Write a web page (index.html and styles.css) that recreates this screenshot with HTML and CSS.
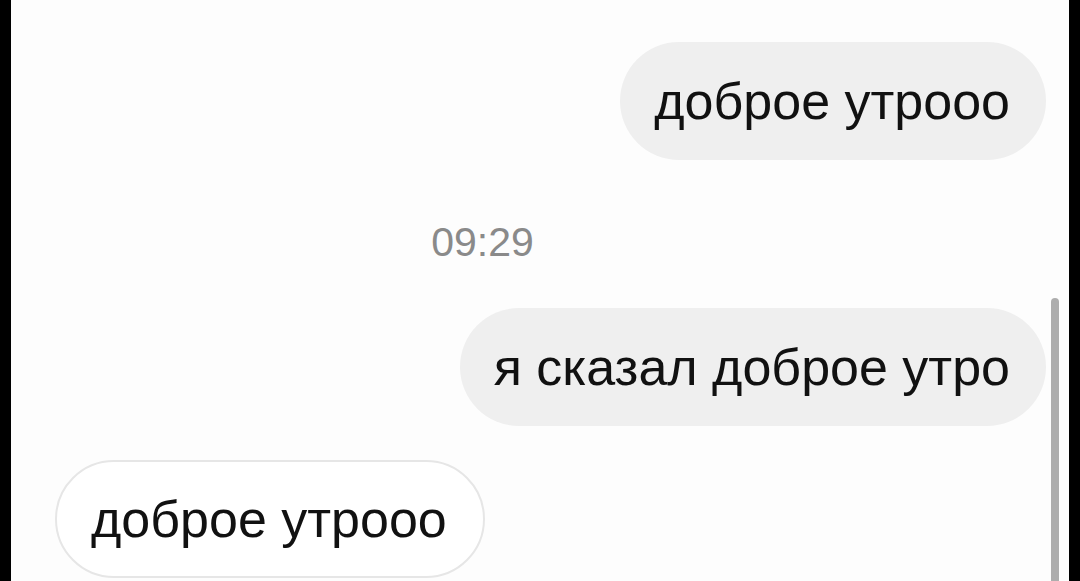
FILE: index.html
```html
<!DOCTYPE html>
<html lang="ru">
<head>
<meta charset="utf-8">
<title>Чат</title>
<link rel="stylesheet" href="styles.css">
</head>
<body>
<div class="screen">
  <div class="edge edge-left"></div>
  <main class="chat">
    <div class="msg msg-out first">доброе утрооо</div>
    <div class="time">09:29</div>
    <div class="msg msg-out second">я сказал доброе утро</div>
    <div class="msg msg-in">доброе утрооо</div>
  </main>
  <div class="scroll"><div class="thumb"></div></div>
  <div class="edge edge-right"></div>
</div>
</body>
</html>
```
FILE: styles.css
```css
html, body {
  margin: 0;
  padding: 0;
  height: 100%;
  overflow: hidden;
  background: #000;
}
.screen {
  display: flex;
  height: 581px;
  width: 1080px;
  background: #fdfdfd;
}
.edge {
  background: #000;
  flex: none;
}
.edge-left { width: 11px; }
.edge-right { width: 11px; margin-left: 10px; }
.chat {
  flex: 1;
  display: flex;
  flex-direction: column;
  padding: 42px 5px 0 44px;
  font-family: "Liberation Sans", Arial, sans-serif;
  color: #111;
}
.msg {
  font-size: 52px;
  line-height: 60px;
  padding: 29px 36px 29px 34px;
  border-radius: 60px;
  white-space: nowrap;
}
.msg-out {
  align-self: flex-end;
  background: #efefef;
}
.second { margin-top: 42px; }
.msg-in {
  align-self: flex-start;
  background: #fff;
  border: 2px solid #e6e6e6;
  padding: 27px 36px 27px 34px;
  margin-top: 34px;
}
.time {
  align-self: center;
  margin-top: 58px;
  margin-right: 136px;
  font-size: 41px;
  line-height: 48px;
  color: #8a8a8a;
}
.scroll {
  width: 8px;
  flex: none;
  display: flex;
  flex-direction: column;
}
.thumb {
  margin-top: 298px;
  flex: 1;
  background: #adadad;
  border-radius: 4px 4px 0 0;
}
```
